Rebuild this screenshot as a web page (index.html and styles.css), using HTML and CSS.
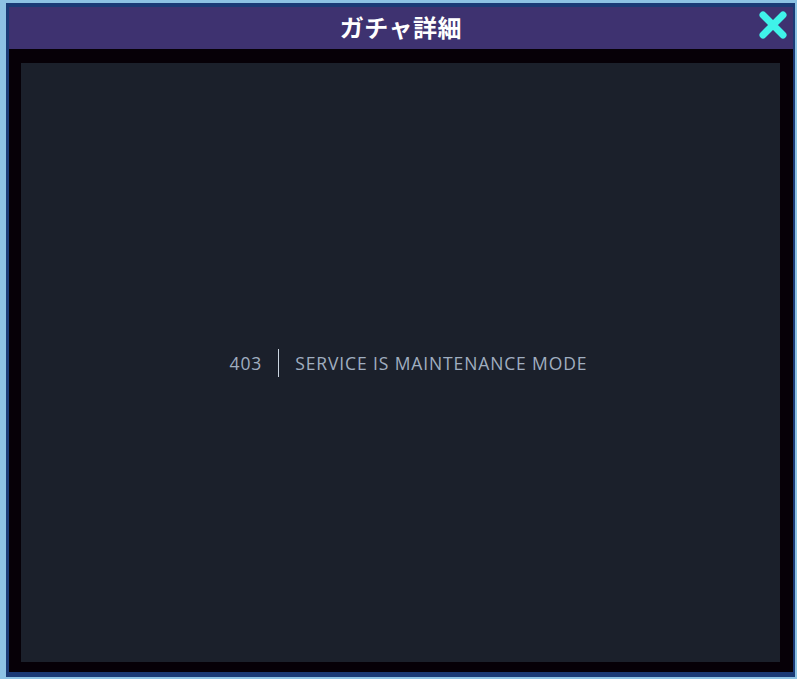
FILE: index.html
```html
<!DOCTYPE html>
<html lang="ja">
<head>
  <meta charset="UTF-8">
  <title>ガチャ詳細</title>
  <link rel="stylesheet" href="styles.css">
</head>
<body>
  <div class="window">
    <div class="header">
      <h1>ガチャ詳細</h1>
      <button class="close" aria-label="閉じる">
        <svg viewBox="0 0 28 28" width="28" height="28">
          <path d="M4 4 L24 24 M24 4 L4 24" stroke="#3ff3e9" stroke-width="7" stroke-linecap="round"/>
        </svg>
      </button>
    </div>

    <div class="stage">
      <div class="panel">
        <div class="error">
          <div class="code">403</div>
          <div class="message">Service Is Maintenance Mode</div>
        </div>
      </div>
    </div>
  </div>
</body>
</html>
```

FILE: styles.css
```css
html, body {
  margin: 0;
  height: 100%;
}

body {
  background-color: #8dc2e4;
  padding: 3px 2px 2px 6px;
  box-sizing: border-box;
  overflow: hidden;
}

.window {
  height: 100%;
  box-sizing: border-box;
  border-style: solid;
  border-color: #1a3a76;
  border-width: 4px 2px 5px 3px;
  display: flex;
  flex-direction: column;
}

.header {
  position: relative;
  height: 42px;
  flex: none;
  background-color: #3e3270;
  display: flex;
  align-items: center;
  justify-content: center;
}

.header h1 {
  margin: 0 0 3px;
  font-family: "Noto Sans CJK JP", "Noto Sans", sans-serif;
  font-size: 24px;
  font-weight: bold;
  color: #fff;
  letter-spacing: 0.5px;
}

.close {
  position: absolute;
  right: 4px;
  top: 2px;
  width: 32px;
  height: 32px;
  padding: 0;
  border: none;
  background: none;
  display: flex;
  align-items: center;
  justify-content: center;
  cursor: pointer;
}

.stage {
  flex: 1;
  background-color: #060007;
  padding: 14px 13px 10px 12px;
  display: flex;
}

.panel {
  flex: 1;
  background-color: #1b202b;
  display: flex;
  align-items: center;
  justify-content: center;
}

.error {
  display: flex;
  align-items: center;
  font-family: "Open Sans", "Noto Sans", sans-serif;
  font-size: 17.5px;
  color: #a0aec0;
  letter-spacing: 0.05em;
}

.code {
  padding: 2px 16px;
  border-right: 1px solid #cbd5e0;
}

.message {
  margin-left: 16px;
  text-transform: uppercase;
}
```
